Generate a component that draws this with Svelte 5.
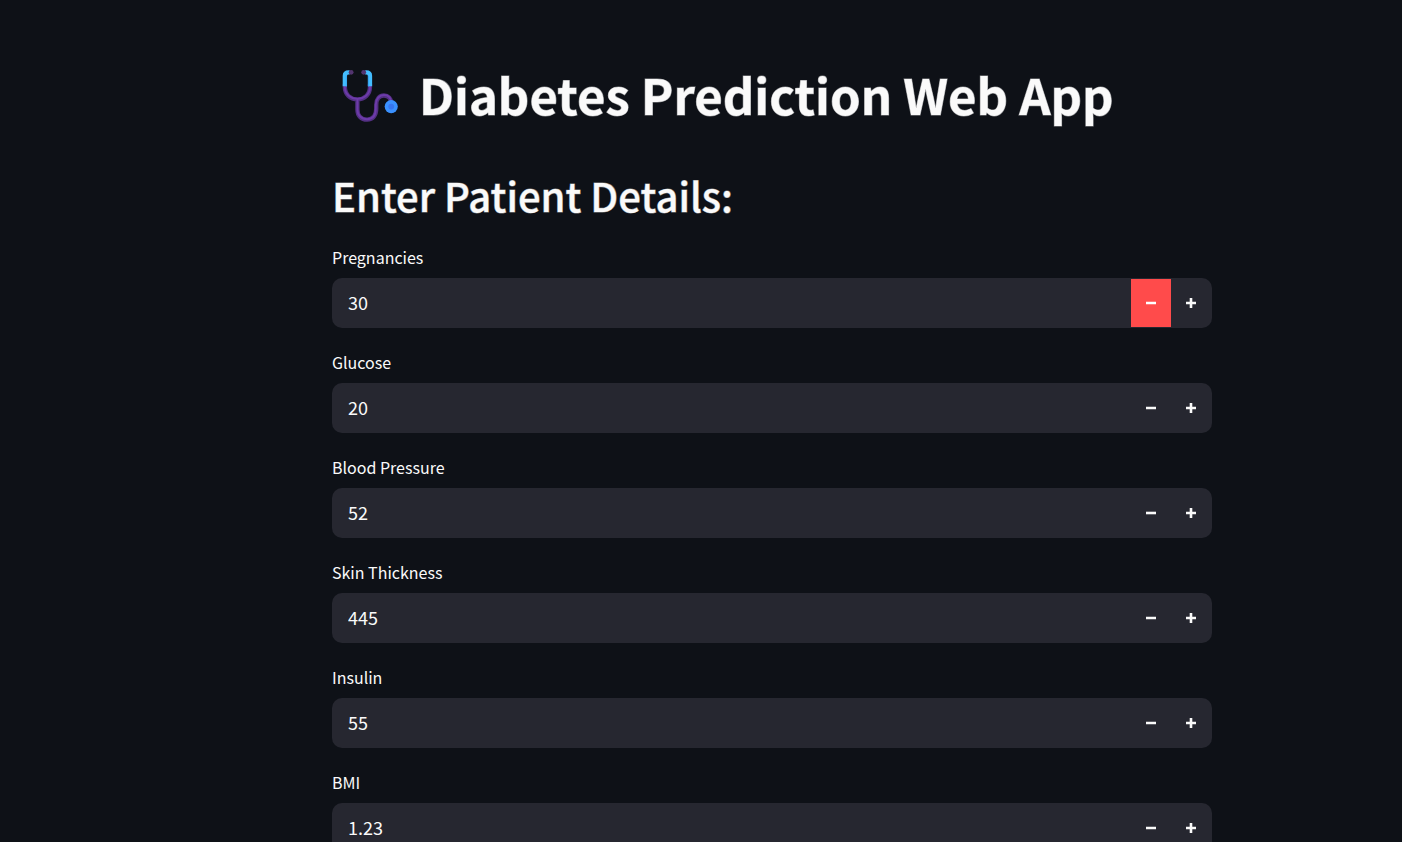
<script>
  let fields = $state([
    { id: 'pregnancies', label: 'Pregnancies', value: '30', step: 1, active: true },
    { id: 'glucose', label: 'Glucose', value: '20', step: 1 },
    { id: 'blood-pressure', label: 'Blood Pressure', value: '52', step: 1 },
    { id: 'skin-thickness', label: 'Skin Thickness', value: '445', step: 1 },
    { id: 'insulin', label: 'Insulin', value: '55', step: 1 },
    { id: 'bmi', label: 'BMI', value: '1.23', step: 0.01 }
  ]);

  function change(field, direction) {
    const digits = field.step < 1 ? 2 : 0;
    const next = Number(field.value) + direction * field.step;
    field.value = Math.max(0, next).toFixed(digits);
  }
</script>

<div class="app">
  <main>
    <h1>
      <svg class="logo" viewBox="0 0 60 58" aria-hidden="true" fill="none">
        <g stroke-linecap="round" stroke-linejoin="round">
          <path d="M5 17V19.500C5 27.500 10.500 32.500 18 32.500S31 27.500 31 19.500V17M18 32.500V43C18 49.500 22 53.500 28 53.500S37.500 49 37.500 42V38C37.500 32 41 28.500 45.500 28.500S53 32 53.500 37" stroke="#533083" stroke-width="4.500" />
          <path d="M5 18V20C5 27 11 32 18 32S31 27 31 20V18M18 33V43C18 49 22 53 28 53S37 49 37 42V38C37 32 41 28 45.500 28S52.500 31 53 35" stroke="#6d3baa" stroke-width="2" />
        </g>
        <path d="M5 19V8Q5 4.500 9 4.500H10M31 19V8Q31 4.500 27 4.500H26" stroke="#43bdff" stroke-width="4.500" />
        <path d="M6.500 19V8M29.500 19V8" stroke="#37a5f3" stroke-width="1" />
        <ellipse cx="11.500" cy="4.500" rx="2.500" ry="2.500" fill="#52346f" />
        <ellipse cx="24.500" cy="4.500" rx="2.500" ry="2.500" fill="#52346f" />
        <circle cx="53" cy="40" r="6.800" fill="#3a91ff" />
        <circle cx="53" cy="40" r="3" fill="#3776f0" />
      </svg>
      <span>Diabetes Prediction Web App</span>
    </h1>
    <h2>Enter Patient Details:</h2>
    <form>
      {#each fields as field (field.id)}
        <div class="field">
          <label for={field.id}>{field.label}</label>
          <div class="control">
            <input id={field.id} type="text" inputmode="decimal" bind:value={field.value} />
            <button type="button" class:active={field.active} aria-label="Decrease {field.label}" onclick={() => change(field, -1)}>
              <svg viewBox="0 0 12 12" aria-hidden="true"><path d="M1 4.700H11V7.300H1Z" fill="currentColor" /></svg>
            </button>
            <button type="button" aria-label="Increase {field.label}" onclick={() => change(field, 1)}>
              <svg viewBox="0 0 12 12" aria-hidden="true"><path d="M4.700 1H7.300V4.700H11V7.300H7.300V11H4.700V7.300H1V4.700H4.700Z" fill="currentColor" /></svg>
            </button>
          </div>
        </div>
      {/each}
    </form>
  </main>
</div>

<style>
  :global(body) {
    margin: 0;
    background: #0e1117;
  }

  .app {
    box-sizing: border-box;
    height: 100vh;
    overflow-y: auto;
    scrollbar-width: none;
    padding: 59px 0 60px 142px;
    background: #0e1117;
    color: #fafafa;
    font-family: "Noto Sans CJK SC", "Noto Sans", sans-serif;
  }

  main {
    max-width: 880px;
    margin: 0 auto;
  }

  h1,
  h2 {
    margin: 0;
    white-space: nowrap;
    -webkit-text-stroke: 1px rgb(250 250 250 / 50%);
  }

  h1 {
    display: flex;
    align-items: flex-start;
    gap: 21px;
    padding-left: 8px;
    font-size: 49px;
    font-weight: 700;
    line-height: 70px;
  }

  .logo {
    flex: none;
    width: 58px;
    height: 56px;
    margin-top: 9px;
  }

  h2 {
    margin: 35px 0 17px;
    font-size: 40px;
    font-weight: 500;
    line-height: 62px;
  }

  form {
    display: flex;
    flex-direction: column;
    gap: 20px;
  }

  .field {
    display: flex;
    flex-direction: column;
    gap: 7px;
  }

  label {
    align-self: flex-start;
    font-size: 16px;
    line-height: 28px;
  }

  .control {
    box-sizing: border-box;
    display: flex;
    height: 50px;
    padding: 1px;
    border-radius: 10px;
    overflow: hidden;
    background: #262730;
  }

  input {
    flex: 1;
    min-width: 0;
    padding: 0 15px 2px;
    border: 0;
    outline: 0;
    background: transparent;
    color: inherit;
    font: inherit;
    font-size: 18px;
  }

  button {
    display: grid;
    place-items: center;
    width: 40px;
    padding: 0;
    border: 0;
    background: transparent;
    color: #fafafa;
    cursor: pointer;
  }

  button svg {
    width: 12px;
    height: 12px;
  }

  button:hover,
  button.active {
    background: #ff4b4b;
    color: #fff;
  }
</style>
